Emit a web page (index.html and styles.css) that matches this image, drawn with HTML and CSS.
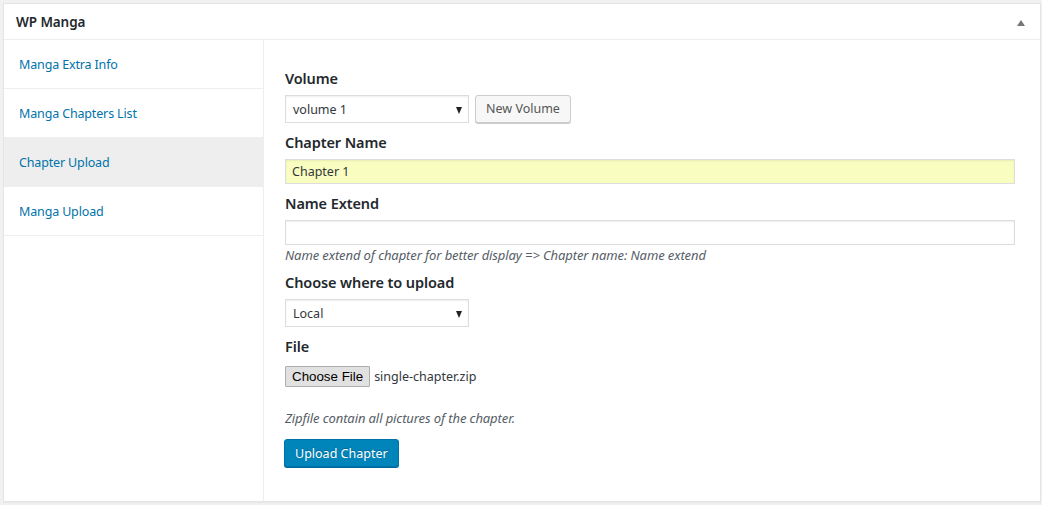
FILE: index.html
```html
<!DOCTYPE html>
<html>
<head>
<meta charset="utf-8">
<link rel="stylesheet" href="styles.css">
</head>
<body>
<div class="postbox">
  <div class="hndle">
    <h2 class="title">WP Manga</h2>
    <span class="toggle"></span>
  </div>
  <div class="inside">
    <ul class="tabs">
      <li class="tab">Manga Extra Info</li>
      <li class="tab">Manga Chapters List</li>
      <li class="tab active">Chapter Upload</li>
      <li class="tab">Manga Upload</li>
    </ul>
    <div class="panel">
      <div class="field">
        <h3 class="label">Volume</h3>
        <div class="row">
          <div class="select"><span class="select-text">volume 1</span><span class="arrow"></span></div>
          <button class="btn">New Volume</button>
        </div>
      </div>
      <div class="field">
        <h3 class="label">Chapter Name</h3>
        <div class="input filled">Chapter 1</div>
      </div>
      <div class="field">
        <h3 class="label">Name Extend</h3>
        <div class="input"></div>
        <p class="desc">Name extend of chapter for better display =&gt; Chapter name: Name extend</p>
      </div>
      <div class="field">
        <h3 class="label">Choose where to upload</h3>
        <div class="select"><span class="select-text">Local</span><span class="arrow"></span></div>
      </div>
      <div class="field">
        <h3 class="label">File</h3>
        <div class="file-row">
          <span class="file-btn">Choose File</span>
          <span class="file-name">single-chapter.zip</span>
        </div>
        <p class="desc zip">Zipfile contain all pictures of the chapter.</p>
      </div>
      <button class="btn-primary">Upload Chapter</button>
    </div>
  </div>
</div>
</body>
</html>
```

FILE: styles.css
```css
html, body {
  margin: 0;
  padding: 0;
  background: #f1f1f1;
}
body {
  padding: 3px 1px 4px 3px;
  font-family: "Noto Sans", "Open Sans", sans-serif;
  color: #23282d;
  font-size: 13px;
}
.postbox {
  background: #fff;
  border: 1px solid #e5e5e5;
  box-shadow: 0 1px 1px rgba(0,0,0,0.04);
  width: 1038px;
  height: 499px;
  box-sizing: border-box;
  display: flex;
  flex-direction: column;
}
.hndle {
  height: 35px;
  border-bottom: 1px solid #eee;
  display: flex;
  align-items: center;
  justify-content: space-between;
  padding: 0 12px 0 12px;
  flex-shrink: 0;
}
.title {
  margin: 0;
  font-size: 13.5px;
  font-weight: 600;
  color: #23282d;
  letter-spacing: -0.1px;
}
.toggle {
  width: 0;
  height: 0;
  border-left: 4px solid transparent;
  border-right: 4px solid transparent;
  border-bottom: 6px solid #72777c;
  margin-right: 3px;
  margin-top: 2px;
}
.inside {
  flex: 1;
  display: flex;
}
.tabs {
  list-style: none;
  margin: 0;
  padding: 0;
  width: 259px;
  border-right: 1px solid #eee;
  flex-shrink: 0;
}
.tab {
  height: 48px;
  box-sizing: border-box;
  padding-top: 2px;
  line-height: 46px;
  border-bottom: 1px solid #eee;
  padding-left: 15px;
  color: #0073aa;
  font-size: 12.5px;
  letter-spacing: -0.15px;
}
.tab + .tab {
  height: 49px;
}
.tab:first-child {
  height: 49px;
}
.tab.active {
  background: #eee;
}
.panel {
  flex: 1;
  padding: 28px 25px 0 21px;
}
.field {
  margin-bottom: 9px;
}
.label {
  margin: 0 0 7px 0;
  font-size: 14.5px;
  font-weight: 600;
  line-height: 20px;
  color: #23282d;
  letter-spacing: -0.1px;
}
.row {
  display: flex;
  align-items: center;
  gap: 6px;
}
.select {
  position: relative;
  width: 184px;
  height: 28px;
  box-sizing: border-box;
  border: 1px solid #ddd;
  box-shadow: inset 0 1px 2px rgba(0,0,0,0.07);
  background: #fff;
  display: flex;
  align-items: center;
  padding-left: 7px;
  font-size: 12.5px;
  color: #32373c;
}
.arrow {
  position: absolute;
  right: 6px;
  top: 11px;
  width: 0;
  height: 0;
  border-left: 3.5px solid transparent;
  border-right: 3.5px solid transparent;
  border-top: 7px solid #222;
}
.btn {
  height: 28px;
  padding: 0 10px;
  font-family: inherit;
  font-size: 12.5px;
  color: #555;
  background: #f7f7f7;
  border: 1px solid #ccc;
  border-radius: 3px;
  box-shadow: 0 1px 0 #ccc;
  margin-top: -1px;
}
.input {
  height: 25px;
  box-sizing: border-box;
  width: 730px;
  border: 1px solid #ddd;
  box-shadow: inset 0 1px 2px rgba(0,0,0,0.07);
  background: #fff;
  padding-left: 6px;
  line-height: 23px;
  font-size: 12.5px;
  color: #32373c;
}
.input.filled {
  background: #fafdc0;
}
.desc {
  margin: 2px 0 0 0;
  font-style: italic;
  font-size: 13px;
  color: #555d66;
  line-height: 16px;
  letter-spacing: -0.1px;
}
.desc.zip {
  margin-top: 23px;
  margin-bottom: 13px;
}
.file-row {
  display: flex;
  align-items: center;
  gap: 4px;
  margin-top: 10px;
}
.file-btn {
  font-family: "Liberation Sans", Arial, sans-serif;
  font-size: 13.33px;
  height: 21px;
  box-sizing: border-box;
  line-height: 19px;
  padding: 0 6px;
  border: 1px solid #adadad;
  background: #e1e1e1;
  color: #000;
  border-radius: 1px;
}
.file-name {
  font-size: 12.5px;
  color: #32373c;
}
.btn-primary {
  height: 28px;
  padding: 0 10px;
  margin-left: -1px;
  font-family: inherit;
  font-size: 12.5px;
  color: #fff;
  background: #0085ba;
  border: 1px solid #0073aa;
  border-radius: 3px;
  box-shadow: 0 1px 0 #006799;
  text-shadow: 0 -1px 1px #006799;
}
```
